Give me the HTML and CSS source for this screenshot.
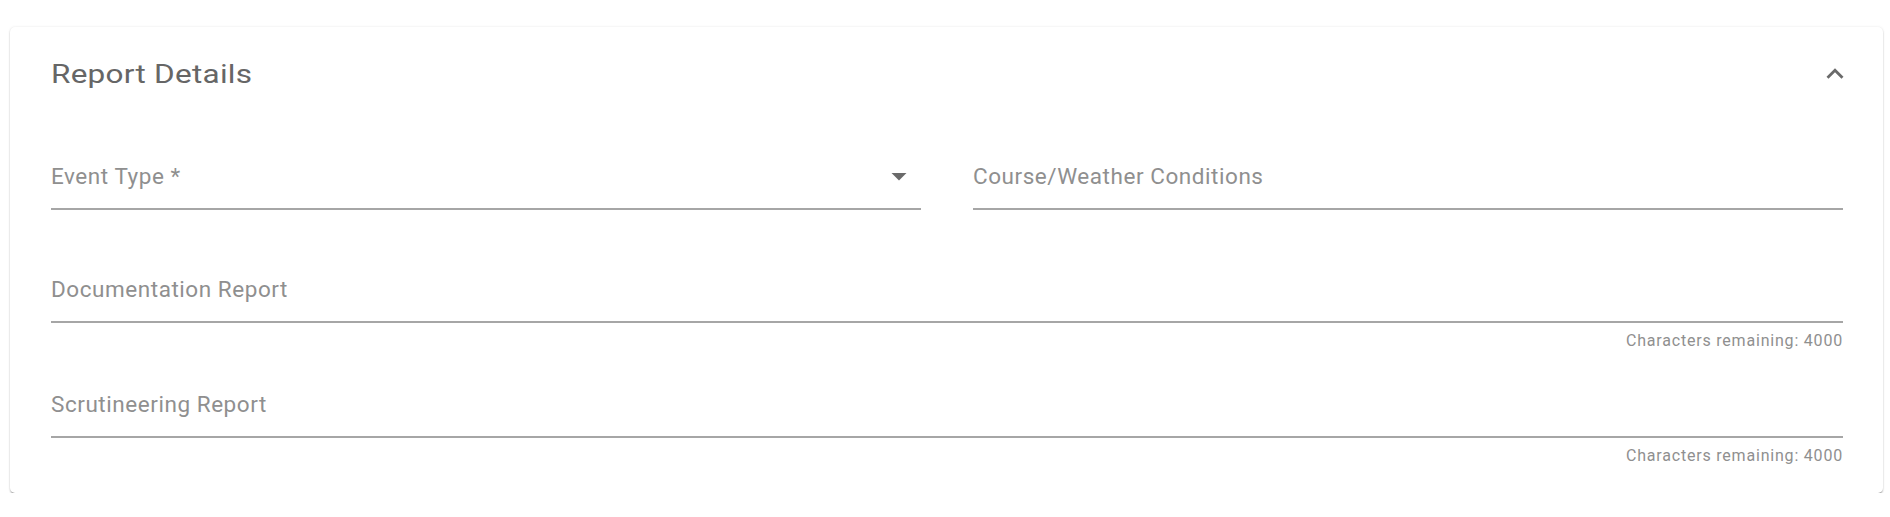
FILE: index.html
```html
<!DOCTYPE html>
<html lang="en">
  <head>
    <meta charset="UTF-8" />
    <meta name="viewport" content="width=device-width, initial-scale=1.0" />
    <title>Report Details</title>
    <link rel="stylesheet" href="styles.css">
  </head>
  <body>
    <div class="card">
      <div class="card-header">
        <h2 class="card-title">Report Details</h2>
        <button class="collapse-btn" aria-label="Collapse">
          <svg viewBox="0 0 24 24" width="34" height="34">
            <path d="M12 8l-6 6 1.41 1.41L12 10.83l4.59 4.58L18 14z" />
          </svg>
        </button>
      </div>

      <div class="card-body">
        <div class="field-row">
          <div class="field">
            <div class="control">
              <span class="label">Event Type *</span>
              <svg class="select-arrow" viewBox="0 0 24 24" width="36" height="36">
                <path d="M7 10l5 5 5-5z" />
              </svg>
            </div>
          </div>
          <div class="field">
            <div class="control">
              <span class="label">Course/Weather Conditions</span>
            </div>
          </div>
        </div>

        <div class="field with-helper">
          <div class="control">
            <span class="label">Documentation Report</span>
          </div>
          <p class="helper">Characters remaining: 4000</p>
        </div>

        <div class="field with-helper">
          <div class="control">
            <span class="label">Scrutineering Report</span>
          </div>
          <p class="helper">Characters remaining: 4000</p>
        </div>
      </div>
    </div>
  </body>
</html>
```

FILE: styles.css
```css
* {
  margin: 0;
  padding: 0;
  box-sizing: border-box;
}

body {
  font-family: Roboto, "Liberation Sans", sans-serif;
  background-color: #fff;
  padding: 27px 7px 0 10px;
}

.card {
  background-color: #fff;
  border-radius: 5px;
  box-shadow: 0 2px 2px -1px rgba(0, 0, 0, 0.35), 0 1px 2px 0 rgba(0, 0, 0, 0.14),
    0 0 3px 0 rgba(0, 0, 0, 0.08);
  padding-bottom: 28px;
}

.card-header {
  display: flex;
  align-items: center;
  justify-content: space-between;
  padding: 31px 31px 0 41px;
  height: 65px;
}

.card-title {
  font-size: 25px;
  font-weight: 400;
  line-height: 30px;
  color: #666;
  letter-spacing: 0.2px;
  transform: scaleX(1.26);
  transform-origin: left center;
}

.collapse-btn {
  width: 34px;
  height: 34px;
  margin-bottom: 3px;
  border: none;
  background: none;
  cursor: pointer;
  display: flex;
}

.collapse-btn svg {
  fill: #6a6a6a;
}

.card-body {
  padding: 71px 40px 0 41px;
}

.field-row {
  display: grid;
  grid-template-columns: 1fr 1fr;
  column-gap: 52px;
  margin-bottom: 66px;
}

.field.with-helper + .field.with-helper {
  margin-top: 41px;
}

.control {
  display: flex;
  align-items: flex-start;
  justify-content: space-between;
  height: 47px;
  padding-bottom: 18px;
  border-bottom: 2px solid #a6a6a6;
}

.label {
  font-size: 22.5px;
  line-height: 27px;
  color: #8f8f8f;
  letter-spacing: 0.55px;
}

.select-arrow {
  fill: #6a6a6a;
  margin: -5px 4px 0 0;
  flex-shrink: 0;
}

.helper {
  margin-top: 8px;
  font-size: 16px;
  line-height: 19px;
  color: #8f8f8f;
  letter-spacing: 0.8px;
  text-align: right;
}
```
